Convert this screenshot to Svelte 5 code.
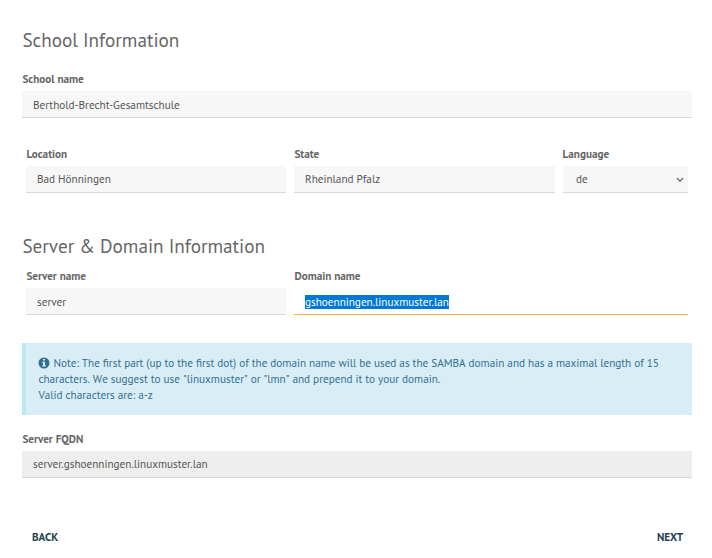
<script>
  const host = 'server';
  const domain = 'gshoenningen.linuxmuster.lan';
</script>

<main>
  <h1 class="first">School Information</h1>
  <div class="field">
    <span class="label">School name</span>
    <div class="control low"><span>Berthold-Brecht-Gesamtschule</span></div>
  </div>

  <div class="row place">
    <div class="field">
      <span class="label">Location</span>
      <div class="control"><span>Bad Hönningen</span></div>
    </div>
    <div class="field">
      <span class="label">State</span>
      <div class="control"><span>Rheinland Pfalz</span></div>
    </div>
    <div class="field">
      <span class="label lang">Language</span>
      <div class="control select">
        <span>de</span>
        <svg width="8" height="6" viewBox="0 0 8 6"><path d="M1 1.2 4 4.2 7 1.2" fill="none" stroke="#555" stroke-width="1.2" /></svg>
      </div>
    </div>
  </div>

  <h1 class="second"><span>Server &amp; Domain Information</span></h1>
  <div class="row server">
    <div class="field">
      <span class="label">Server name</span>
      <div class="control low"><span>{host}</span></div>
    </div>
    <div class="field">
      <span class="label">Domain name</span>
      <div class="control low focused"><span class="selected">{domain}</span></div>
    </div>
  </div>

  <div class="note">
    <div class="l1"><svg width="12" height="12" viewBox="0 0 12 12"><circle cx="6" cy="6" r="5.5" fill="#31708f" /><path d="M5 2h2v1.6H5zM4.3 4.7H7v3.6h.8v1.2H4.2V8.3H5V5.9h-.7z" fill="#d9edf7" /></svg><span>Note: The first part (up to the first dot) of the domain name will be used as the SAMBA domain and has a maximal length of 15</span></div>
    <div><span>characters. We suggest to use "linuxmuster" or "lmn" and prepend it to your domain.</span></div>
    <div><span>Valid characters are: a-z</span></div>
  </div>

  <div class="field">
    <span class="label">Server FQDN</span>
    <div class="control readonly"><span>{host}.{domain}</span></div>
  </div>

  <nav><span>BACK</span><span>NEXT</span></nav>
</main>

<style>
  :global(body) { background: #fff; }
  main {
    box-sizing: border-box;
    width: 712px;
    height: 558px;
    padding: 26px 20px 0 22px;
    overflow: hidden;
    font: 11.2px/16px "PT Sans", "Noto Sans", sans-serif;
    color: #555;
    white-space: nowrap;
  }
  h1 { margin: 0; padding-left: 0.4px; font-size: 19.2px; line-height: 28px; font-weight: 400; color: #666; }
  .first { margin-bottom: 17px; }
  .second { margin: 39px 0 8px; }
  .field { display: flex; flex-direction: column; }
  .label { align-self: flex-start; height: 20px; padding-left: 0.4px; font-weight: 700; color: #666; }
  .lang { padding: 0; margin-left: -0.5px; }
  .control {
    box-sizing: border-box;
    display: flex;
    align-items: center;
    height: 27px;
    padding: 0 11px;
    background: #f7f7f7;
    border-bottom: 1px solid #d9d9d9;
  }
  .low { padding-top: 2px; }
  .row { display: grid; gap: 8px; padding: 0 4px; }
  .place { grid-template-columns: 260px 261px 125px; margin-top: 28px; }
  .server { grid-template-columns: 260px 394px; }
  .select { justify-content: space-between; padding: 0 4px 0 13px; }
  .select svg { margin-top: 1px; }
  .readonly { background: #eee; }
  .focused { background: #fff; border-color: #ffab40; }
  .selected { height: 14px; line-height: 14px; color: #fff; background: #0078d7; }
  .note {
    box-sizing: border-box;
    height: 72px;
    margin: 28px 0 16px;
    padding: 12px 12px 12px 12.4px;
    border-left: 4px solid #b8e8f1;
    background: #d9edf7;
    color: #31708f;
    font-kerning: none;
  }
  .l1 { display: flex; align-items: center; gap: 3px; }
  nav { display: flex; justify-content: space-between; margin-top: 51px; padding: 0 9px 0 10px; font-weight: 700; color: #263f50; }
</style>
